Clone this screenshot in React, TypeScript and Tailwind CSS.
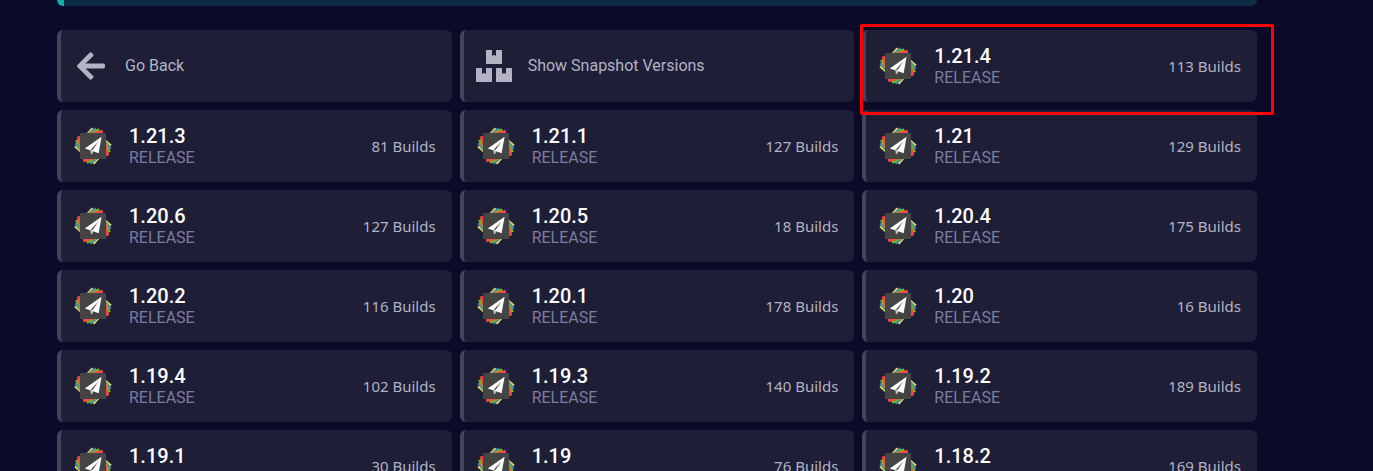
import type { ReactNode } from 'react';
import { FaArrowLeft, FaBoxes } from 'react-icons/fa';

interface Version {
  name: string;
  builds: number;
  highlighted?: boolean;
}

const versions: Version[] = [
  { name: '1.21.4', builds: 113, highlighted: true },
  { name: '1.21.3', builds: 81 },
  { name: '1.21.1', builds: 127 },
  { name: '1.21', builds: 129 },
  { name: '1.20.6', builds: 127 },
  { name: '1.20.5', builds: 18 },
  { name: '1.20.4', builds: 175 },
  { name: '1.20.2', builds: 116 },
  { name: '1.20.1', builds: 178 },
  { name: '1.20', builds: 16 },
  { name: '1.19.4', builds: 102 },
  { name: '1.19.3', builds: 140 },
  { name: '1.19.2', builds: 189 },
  { name: '1.19.1', builds: 30 },
  { name: '1.19', builds: 76 },
  { name: '1.18.2', builds: 169 },
];

const tile =
  'flex h-[72px] w-full cursor-pointer items-center gap-4 rounded-md border-l-4 border-[#43435a] bg-[#1e1e37] pr-4 pl-3 text-left';

function PaperLogo() {
  return (
    <svg viewBox="0 0 40 40" className="size-10 shrink-0" aria-hidden="true">
      <rect x="6.8" y="6.8" width="26.4" height="26.4" fill="#f0d64e" transform="rotate(-49 20 20)" />
      <rect x="6.8" y="6.8" width="26.4" height="26.4" fill="#3b86cc" transform="rotate(-39 20 20)" />
      <rect x="6.8" y="6.8" width="26.4" height="26.4" fill="#78b80e" transform="rotate(-28 20 20)" />
      <rect x="6.8" y="6.8" width="26.4" height="26.4" fill="#f5484c" transform="rotate(-15 20 20)" />
      <rect x="7" y="7" width="26" height="26" fill="#444444" />
      <path d="M17.2 23.4 18 28.8 20.6 25.8 19.6 23.4Z" fill="#c4c4c4" />
      <path d="M28.6 10.8 11.8 22.4 17.2 24.2 25.6 15.2 19 24.8 25.6 27.2Z" fill="#ffffff" />
    </svg>
  );
}

/**
 * Tile for an action, with an icon and a single label.
 */
function ActionTile({ icon, children }: { icon: ReactNode; children: ReactNode }) {
  return (
    <button type="button" className={tile}>
      <span className="flex w-9 shrink-0 justify-center text-[#b3b3c4]">{icon}</span>
      <span className="text-base text-[#b3b3c4]">{children}</span>
    </button>
  );
}

/**
 * Tile for a release, with its name and number of builds.
 */
function VersionTile({ name, builds, highlighted }: Version) {
  return (
    <div className="relative">
      <button type="button" className={tile}>
        <PaperLogo />
        <span className="flex grow flex-col">
          <span className="text-xl leading-6 font-medium text-white">{name}</span>
          <span className="text-base leading-5 text-[#7c7ca0]">RELEASE</span>
        </span>
        <span className="font-['Noto_Sans',sans-serif] text-[15px] text-[#b3b3c4]">{builds} Builds</span>
      </button>
      {highlighted && (
        <div className="pointer-events-none absolute -top-1.5 -right-[17px] -bottom-[13px] -left-0.5 z-10 rounded-xs border-3 border-[#ff0000]" />
      )}
    </div>
  );
}

export default function App() {
  return (
    <main className="h-screen overflow-hidden bg-[#0b0b29] pr-[116px] pl-[57px] font-[Roboto,sans-serif]">
      <div className="mb-6 h-1.5 rounded-b-md border-l-7 border-[#14aeaa] bg-[#0e2b44]" />
      <div className="grid grid-cols-3 gap-2">
        <ActionTile icon={<FaArrowLeft className="size-8" />}>Go Back</ActionTile>
        <ActionTile icon={<FaBoxes className="h-8 w-9" />}>Show Snapshot Versions</ActionTile>
        {versions.map((version) => (
          <VersionTile key={version.name} {...version} />
        ))}
      </div>
    </main>
  );
}
